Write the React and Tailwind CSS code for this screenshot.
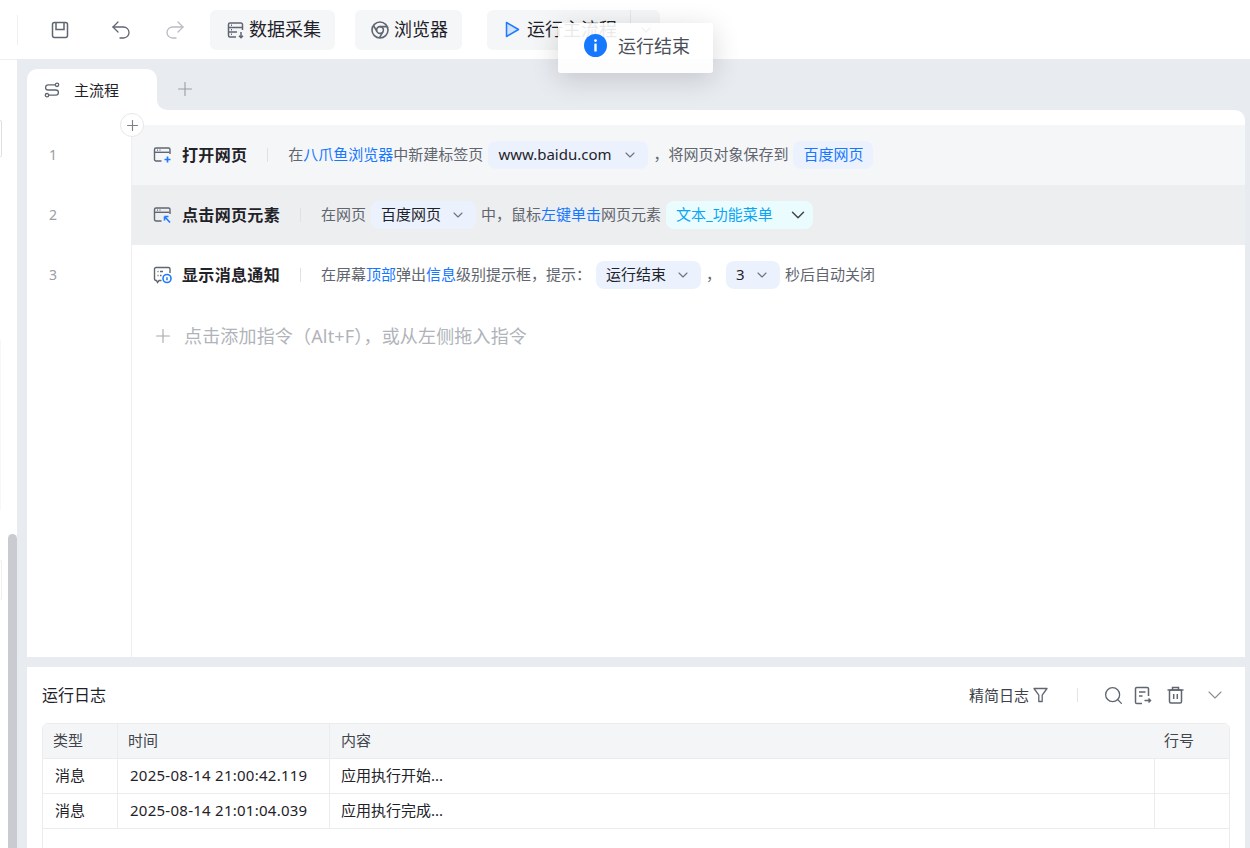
import React from "react";
import { ChevronDown, Plus, Search, Undo2, Redo2 } from "lucide-react";

const Chevron = ({ className = "text-[#6b7280]", size = 16 }) => (
  <ChevronDown size={size} strokeWidth={1.6} className={className} />
);

const SaveIcon = () => (
  <svg width="18" height="18" viewBox="0 0 18 18" fill="none" stroke="#5f6672" strokeWidth="1.5">
    <rect x="1.5" y="1.5" width="15" height="15" rx="2" />
    <path d="M5 2v6.5h8V2" />
  </svg>
);

const CollectIcon = () => (
  <svg width="18" height="18" viewBox="0 0 18 18" fill="none" stroke="#5f6672" strokeWidth="1.5">
    <path d="M9 16H3a1.5 1.5 0 0 1-1.5-1.5v-11A1.5 1.5 0 0 1 3 2h11a1.5 1.5 0 0 1 1.5 1.5V9" />
    <path d="M2 6.5h13M2 11h8M4 4.3h1M4 8.8h1M4 13.3h1" />
    <path d="M14 11v5.5M12 14.7l2 2 2-2" />
  </svg>
);

const ChromeIcon = () => (
  <svg width="18" height="18" viewBox="0 0 18 18" fill="none" stroke="#5f6672" strokeWidth="1.6">
    <circle cx="9" cy="9" r="8" />
    <circle cx="9" cy="9" r="3.4" />
    <path d="M9 5.6h7.2M6 10.7 2.6 4.6M12 10.7 8.4 16.8" />
  </svg>
);

const PlayIcon = () => (
  <svg width="15" height="17" viewBox="0 0 15 17" fill="#cfe2ff" stroke="#1f7aff" strokeWidth="1.5" strokeLinejoin="round">
    <path d="M1.5 1.5v14l12-7z" />
  </svg>
);

const RouteIcon = () => (
  <svg width="16" height="16" viewBox="0 0 16 16" fill="none" stroke="#5f6672" strokeWidth="1.3">
    <circle cx="13" cy="2.8" r="1.7" />
    <circle cx="3" cy="13.2" r="1.7" />
    <path d="M11.2 2.8H4.2a2.6 2.6 0 0 0 0 5.2h7.6a2.6 2.6 0 0 1 0 5.2H4.8" />
  </svg>
);

const WindowBase = ({ children }) => (
  <svg width="19" height="18" viewBox="0 0 19 18" fill="none" className="shrink-0">
    <path d="M8.5 15H3a1.5 1.5 0 0 1-1.5-1.5v-10A1.5 1.5 0 0 1 3 2h12.5A1.5 1.5 0 0 1 17 3.5V8" stroke="#5f6672" strokeWidth="1.4" />
    <path d="M2 6.3h14.5" stroke="#5f6672" strokeWidth="1.4" />
    <path d="M4 4.2h1M6.5 4.2h1" stroke="#5f6672" strokeWidth="1.2" />
    {children}
  </svg>
);

const OpenIcon = () => (
  <WindowBase>
    <path d="M14.5 10.5v6M11.5 13.5h6" stroke="#1f7aff" strokeWidth="1.7" />
  </WindowBase>
);

const ClickIcon = () => (
  <WindowBase>
    <path d="M11.5 10.5v4M11.5 10.5h4M12 11l5 5.5" stroke="#1f7aff" strokeWidth="1.6" />
  </WindowBase>
);

const NotifyIcon = () => (
  <svg width="19" height="18" viewBox="0 0 19 18" fill="none" className="shrink-0">
    <path d="M8.5 14.5H6L4.5 16.5 3.5 14.5H3A1.5 1.5 0 0 1 1.5 13V3A1.5 1.5 0 0 1 3 1.5h12.5A1.5 1.5 0 0 1 17 3v4" stroke="#5f6672" strokeWidth="1.4" />
    <path d="M4.5 5.5h1M7 5.5h3M4.5 9.5h1M7 9.5h1.5" stroke="#5f6672" strokeWidth="1.4" />
    <circle cx="14" cy="12.5" r="4" stroke="#1f7aff" strokeWidth="1.6" />
    <path d="M14 11.2v3" stroke="#1f7aff" strokeWidth="1.5" />
  </svg>
);

const InfoIcon = () => (
  <svg width="23" height="23" viewBox="0 0 23 23">
    <circle cx="11.5" cy="11.5" r="11.5" fill="#1677ff" />
    <circle cx="11.5" cy="6.6" r="1.4" fill="#fff" />
    <rect x="10.3" y="9.5" width="2.4" height="8" rx="0.6" fill="#fff" />
  </svg>
);

const FilterIcon = () => (
  <svg width="15" height="16" viewBox="0 0 15 16" fill="none" stroke="#5f6672" strokeWidth="1.3" strokeLinejoin="round">
    <path d="M1 1.5h13L9.2 8.2V14.5H5.8V8.2z" />
  </svg>
);

const ExportIcon = () => (
  <svg width="18" height="19" viewBox="0 0 18 19" fill="none" stroke="#5f6672" strokeWidth="1.5">
    <path d="M8 17.5H2.8a1.3 1.3 0 0 1-1.3-1.3V2.8a1.3 1.3 0 0 1 1.3-1.3h10.4a1.3 1.3 0 0 1 1.3 1.3V10" />
    <path d="M5 6h6.5M5 10h3.5" />
    <path d="M10.5 14.5h6M14.5 12.5l2 2-2 2" />
  </svg>
);

const TrashIcon = () => (
  <svg width="17" height="18" viewBox="0 0 17 18" fill="none" stroke="#5f6672" strokeWidth="1.5">
    <path d="M.5 4h16M5.5 3.8V1.5h6v2.3" />
    <rect x="2.5" y="4" width="12" height="13" rx="1.5" />
    <path d="M6.7 8v5M10.3 8v5" />
  </svg>
);

const Blue = ({ children }) => <span className="text-[#1677ff]">{children}</span>;

const Txt = ({ children, className = "" }) => <span className={`pb-[2px] ${className}`}>{children}</span>;

const Chip = ({ width, children, tone = "text-[#1f2329]", bg = "bg-[#ebf2fe]", pad = "pr-[10px]", arrow = <Chevron /> }) => (
  <span className={`flex h-7 shrink-0 items-center justify-between rounded-lg pl-[10px] ${pad} ${width} ${bg} ${tone}`}>
    <Txt>{children}</Txt>
    {arrow}
  </span>
);

const Row = ({ num, bg, icon, title, children }) => (
  <div className="flex h-[60px] shrink-0">
    <div className="flex w-[105px] shrink-0 items-center border-r border-[#eeeff1] pb-[2px] pl-[22px] text-[14px] text-[#9a9da5]">{num}</div>
    <div className={`flex flex-1 items-center pl-[21px] ${bg}`}>
      {icon}
      <span className="ml-[10px] text-[16px] font-bold tracking-[0.33px] text-[#1f2329]">{title}</span>
      <span className="ml-5 mr-5 h-[14px] w-px bg-[#dfe1e5]" />
      <div className="flex items-center gap-[5px] text-[15px] text-[#61656e]">{children}</div>
    </div>
  </div>
);

const logs = [
  ["消息", "2025-08-14 21:00:42.119", "应用执行开始..."],
  ["消息", "2025-08-14 21:01:04.039", "应用执行完成..."],
];

export default function App() {
  return (
    <div className="relative flex h-[848px] w-[1250px] flex-col overflow-hidden bg-[#e8ebf0] font-['Noto_Sans','Noto_Sans_CJK_SC',sans-serif] text-[#1f2329]">
      {/* toolbar */}
      <div className="flex h-[59px] shrink-0 items-center bg-white">
        <span className="ml-[17px] h-[30px] w-px bg-[#eeeff1]" />
        <span className="ml-[33px]"><SaveIcon /></span>
        <Undo2 size={24} strokeWidth={1.3} className="ml-10 text-[#5f6672]" />
        <Redo2 size={24} strokeWidth={1.3} className="ml-[30px] text-[#b9bcc2]" />
        <button className="ml-[23px] flex h-10 w-[125px] items-center gap-1 rounded-md bg-[#f5f6f8] pl-[17px] text-[18px]">
          <CollectIcon />
          数据采集
        </button>
        <button className="ml-5 flex h-10 w-[107px] items-center gap-[5px] rounded-md bg-[#f5f6f8] pl-4 text-[18px]">
          <ChromeIcon />
          浏览器
        </button>
        <div className="ml-[25px] flex h-10 items-center rounded-md bg-[#f5f6f8] text-[18px]">
          <button className="flex h-10 w-[143px] items-center gap-[7px] pl-[18px]">
            <PlayIcon />
            运行主流程
          </button>
          <span className="h-10 w-px bg-[#e6e7ea]" />
          <span className="flex w-[29px] justify-center"><Chevron /></span>
        </div>
      </div>

      <div className="flex min-h-0 flex-1">
        {/* collapsed sidebar */}
        <div className="relative w-[17px] shrink-0 border-t border-[#eeeff1] bg-white">
          <div className="mt-[60px] h-[37px] w-[2px] rounded-r border-y border-r border-[#dddfe3]" />
          <div className="mt-[183px] h-[170px] w-px bg-[#f7f7f8]" />
          <div className="mt-[50px] h-10 w-[2px] rounded-r border-y border-r border-[#eeeff1]" />
          <div className="absolute bottom-0 left-2 top-[474px] w-[9px] rounded-t-full bg-[#c9cbd0]" />
        </div>

        <div className="ml-[10px] mr-[5px] flex min-w-0 flex-1 flex-col">
          {/* tabs */}
          <div className="flex h-[51px] shrink-0">
            <div className="flex w-[130px] items-end">
              <div className="flex h-[41px] w-full items-center gap-[14px] rounded-t-[10px] bg-white pl-[17px] pt-[1px] text-[15px]">
                <RouteIcon />
                主流程
              </div>
            </div>
            <div className="flex-1 bg-white">
              <div className="flex h-full items-center rounded-bl-[10px] bg-[#e8ebf0] pl-[17px] pt-[9px]">
                <Plus size={22} strokeWidth={1.2} className="text-[#9a9da5]" />
              </div>
            </div>
          </div>

          {/* flow editor */}
          <div className="relative flex min-h-0 flex-1 flex-col rounded-tr-[10px] bg-white pt-[15px]">
            <div className="absolute left-[93px] top-[3px] flex h-6 w-6 items-center justify-center rounded-full border border-[#e6e7ea] bg-white">
              <Plus size={17} strokeWidth={1.6} className="text-[#7d8087]" />
            </div>
            <Row num="1" bg="bg-[#f5f6f8]" icon={<OpenIcon />} title="打开网页">
              <Txt>在<Blue>八爪鱼浏览器</Blue>中新建标签页</Txt>
              <Chip width="w-[160px]">www.baidu.com</Chip>
              <Txt>，将网页对象保存到</Txt>
              <Chip width="w-20" tone="text-[#1677ff]" arrow={null}>百度网页</Chip>
            </Row>
            <Row num="2" bg="bg-[#edeef0]" icon={<ClickIcon />} title="点击网页元素">
              <Txt>在网页</Txt>
              <Chip width="w-[105px]">百度网页</Chip>
              <Txt>中，鼠标<Blue>左键单击</Blue>网页元素</Txt>
              <Chip
                width="w-[147px]"
                tone="text-[#0aa5f5]"
                bg="bg-[#ebfcff]"
                pad="pr-1"
                arrow={<Chevron size={22} className="text-[#3f4450]" />}
              >
                文本_功能菜单
              </Chip>
            </Row>
            <Row num="3" bg="bg-white" icon={<NotifyIcon />} title="显示消息通知">
              <Txt>在屏幕<Blue>顶部</Blue>弹出<Blue>信息</Blue>级别提示框，提示：</Txt>
              <Chip width="w-[105px]">运行结束</Chip>
              <Txt className="w-[15px]">，</Txt>
              <Chip width="w-[54px]">3</Chip>
              <Txt>秒后自动关闭</Txt>
            </Row>
            <div className="flex min-h-0 flex-1">
              <div className="w-[105px] shrink-0 border-r border-[#eeeff1]" />
              <div className="flex h-[62px] flex-1 items-center pl-5 text-[18px] text-[#b0b3ba]">
                <Plus size={22} strokeWidth={1.2} className="text-[#a4a7ae]" />
                <span className="ml-[10px] tracking-[0.17px]">点击添加指令（Alt+F），或从左侧拖入指令</span>
              </div>
            </div>
          </div>

          {/* run log */}
          <div className="mt-[10px] h-[181px] shrink-0 bg-white px-[15px]">
            <div className="flex h-14 items-center text-[16px]">
              运行日志
              <div className="ml-auto flex items-center text-[15px] text-[#3d4149]">
                精简日志
                <span className="ml-1"><FilterIcon /></span>
                <span className="ml-[29px] h-[14px] w-px bg-[#e3e4e7]" />
                <Search size={21} strokeWidth={1.5} className="ml-[25px] text-[#5f6672]" />
                <span className="ml-[10px]"><ExportIcon /></span>
                <span className="ml-[15px]"><TrashIcon /></span>
                <ChevronDown size={24} strokeWidth={1.1} className="ml-[19px] mr-[3px] text-[#8b8e95]" />
              </div>
            </div>
            <div className="h-[200px] rounded-t-md border border-[#ebecee] text-[15px]">
              <div className="grid h-[35px] grid-cols-[74px_212px_825px_1fr] items-center rounded-t-md border-b border-[#ebecee] bg-[#f4f5f7] text-[#41454d]">
                <span className="h-full pl-[10px] leading-[33px]">类型</span>
                <span className="h-full border-l border-[#ebecee] pl-[10px] leading-[33px]">时间</span>
                <span className="h-full border-l border-[#ebecee] pl-[11px] leading-[33px]">内容</span>
                <span className="h-full border-l border-transparent pl-[9px] leading-[33px]">行号</span>
              </div>
              {logs.map(([type, time, text]) => (
                <div key={time} className="grid h-[35px] grid-cols-[74px_212px_825px_1fr] items-center border-b border-[#ebecee]">
                  <span className="h-full pl-3 leading-[33px]">{type}</span>
                  <span className="h-full border-l border-[#ebecee] pl-3 leading-[33px] tracking-[0.26px]">{time}</span>
                  <span className="h-full border-l border-[#ebecee] pl-[11px] leading-[33px]">{text}</span>
                  <span className="h-full border-l border-[#ebecee]" />
                </div>
              ))}
            </div>
          </div>
        </div>
      </div>

      {/* toast, sits over the toolbar */}
      <div className="absolute left-[558px] top-[23px] flex h-[50px] w-[155px] items-center rounded-[3px] bg-white/90 pb-[5px] pl-[26px] text-[18px] text-[#4b4f57] shadow-[0_6px_28px_rgba(0,0,0,0.16)]">
        <InfoIcon />
        <span className="ml-[11px] mt-[1px]">运行结束</span>
      </div>
    </div>
  );
}
